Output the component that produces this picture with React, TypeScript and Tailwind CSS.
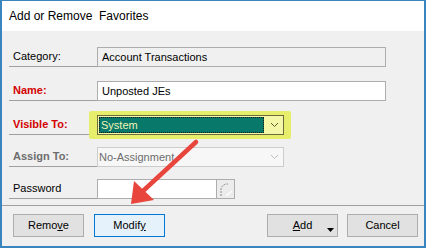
import React from "react";

function Chevron({ color }: { color: string }) {
  return (
    <svg width="9" height="6" viewBox="0 0 9 6">
      <path d="M1 1 L4.5 4.5 L8 1" fill="none" stroke={color} strokeWidth="1" />
    </svg>
  );
}

function Label({ children, cls }: { children: React.ReactNode; cls?: string }) {
  return (
    <div className={`w-[88px] h-[20px] border-b border-[#a0a0a0] flex items-center pl-[4px] ${cls ?? ""}`}>
      {children}
    </div>
  );
}

function Btn({ children, blue, extra }: { children: React.ReactNode; blue?: boolean; extra?: React.ReactNode }) {
  return (
    <div
      className={`relative w-[71px] h-[23px] border flex items-center justify-center text-black ${
        blue ? "bg-[#e5f1fb] border-[#0078d7]" : "bg-[#e1e1e1] border-[#adadad]"
      }`}
    >
      <span className="leading-none">{children}</span>
      {extra}
    </div>
  );
}

export default function App() {
  return (
    <div className="relative w-[426px] h-[248px] font-['Liberation_Sans',Arial,sans-serif] text-[11px] text-black">
      <div className="w-[426px] h-[248px] border-[#3a85bd] border-t border-x-2 border-b-2 bg-[#f0f0f0] flex flex-col">
        <div className="h-[30px] bg-white pl-[7px] flex items-center text-[12px] whitespace-pre">
          Add or Remove  Favorites
        </div>

        <div className="pl-[7px] pt-[16px] flex flex-col">
          {/* Category */}
          <div className="flex h-[20px]">
            <Label>Category:</Label>
            <div className="w-[289px] h-[20px] border border-[#adadad] bg-[#f0f0f0] flex items-center pl-[4px]">
              Account Transactions
            </div>
          </div>

          {/* Name */}
          <div className="flex h-[20px] mt-[14px]">
            <Label cls="font-bold text-[#d40000]">Name:</Label>
            <div className="w-[289px] h-[20px] border border-[#adadad] bg-white flex items-center pl-[4px]">
              Unposted JEs
            </div>
          </div>

          {/* Visible To */}
          <div className="flex h-[20px] mt-[14px]">
            <Label cls="font-bold text-[#d40000]">Visible To:</Label>
            <div className="relative w-[187px] h-[20px]">
              <div className="absolute -left-[8px] -right-[7px] -top-[4px] -bottom-[4px] bg-[#e6ee6c] rounded-[2px]" />
              <div className="relative w-[187px] h-[20px] border border-[#6e6c3a] bg-[#f4f6a8] flex">
                <div className="flex-1 p-[1px]">
                  <div className="h-full bg-[#08786a] border border-dotted border-[#1b1b10] flex items-center pl-[1px] text-[#f2f4b4]">
                    System
                  </div>
                </div>
                <div className="w-[18px] flex items-center justify-center">
                  <Chevron color="#5a5a2a" />
                </div>
              </div>
            </div>
          </div>

          {/* Assign To */}
          <div className="flex h-[20px] mt-[12px]">
            <Label cls="font-bold text-[#6d6d6d]">Assign To:</Label>
            <div className="w-[187px] h-[20px] border border-[#cccccc] bg-[#f7f7f7] flex">
              <div className="flex-1 flex items-center pl-[1px] text-[#6d6d6d]">No-Assignment</div>
              <div className="w-[18px] flex items-center justify-center">
                <Chevron color="#bdbdbd" />
              </div>
            </div>
          </div>

          {/* Password */}
          <div className="flex h-[20px] mt-[12px]">
            <Label>Password</Label>
            <div className="w-[120px] h-[20px] border border-[#adadad] bg-white" />
            <div className="w-[18px] h-[20px] border border-l-0 border-[#adadad] bg-[#ececec] flex items-center justify-center">
              <svg width="16" height="18" viewBox="0 0 16 18">
                <path d="M3 16 L3 9 Q4 5 8 4 L10 4" fill="none" stroke="#8a8a8a" strokeWidth="1" strokeDasharray="2 1" />
                <path d="M8 16 L14 11" fill="none" stroke="#ffffff" strokeWidth="1.2" />
              </svg>
            </div>
          </div>
        </div>

        <div className="mt-[6px] h-px bg-[#a0a0a0]" />

        <div className="mt-[8px] flex pl-[11px] pr-[6px]">
          <div className="flex gap-[10px]">
            <Btn>
              Remo<span className="underline">v</span>e
            </Btn>
            <Btn blue>
              Modif<span className="underline">y</span>
            </Btn>
          </div>
          <div className="ml-auto flex gap-[9px]">
            <Btn
              extra={
                <svg className="absolute left-[59px] top-[13px]" width="7" height="4" viewBox="0 0 7 4">
                  <path d="M0 0 L7 0 L3.5 4 Z" fill="#000" />
                </svg>
              }
            >
              <span className="underline">A</span>dd
            </Btn>
            <Btn>Cancel</Btn>
          </div>
        </div>
      </div>

      <svg className="absolute left-0 top-0 pointer-events-none" width="426" height="248" viewBox="0 0 426 248">
        <line x1="196" y1="142" x2="143" y2="191" stroke="#e8453c" strokeWidth="4.5" strokeLinecap="round" />
        <polygon points="131,204 134,181 154,200" fill="#e8453c" />
      </svg>
    </div>
  );
}
